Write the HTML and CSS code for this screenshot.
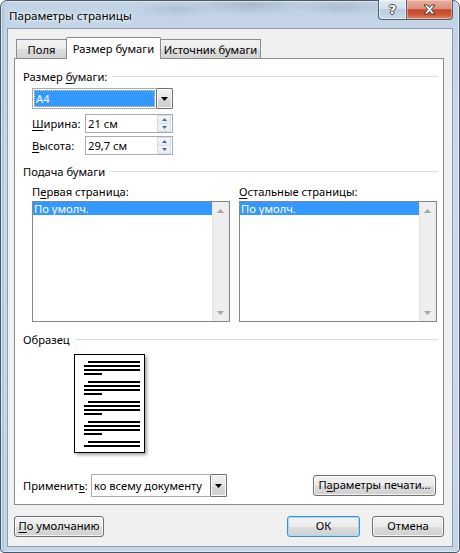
FILE: index.html
```html
<!DOCTYPE html>
<html lang="ru">
<head>
<meta charset="utf-8">
<title>Параметры страницы</title>
<link rel="stylesheet" href="styles.css">
</head>
<body>
<div class="window">
  <div class="titlebar">
    <div class="title">Параметры страницы</div>
    <div class="caption-buttons">
      <div class="cap-btn help"><span class="help-glyph">?</span></div>
      <div class="cap-btn close">
        <svg width="13" height="11" viewBox="0 0 13 11"><path d="M1 1 H4.5 L6.5 3.6 L8.5 1 H12 L8.3 5.5 L12 10 H8.5 L6.5 7.4 L4.5 10 H1 L4.7 5.5 Z" fill="#fff" stroke="#3d3d3d" stroke-width="1" stroke-linejoin="round"/></svg>
      </div>
    </div>
  </div>
  <div class="client">
    <div class="tabs">
      <div class="tab tab-fields">Поля</div>
      <div class="tab tab-size active">Размер бумаги</div>
      <div class="tab tab-source">Источник бумаги</div>
    </div>
    <div class="panel">
      <div class="group-head"><span>Размер <u>б</u>умаги:</span><i class="rule"></i></div>
      <div class="indent">
        <div class="combo combo-size">
          <div class="combo-field"><div class="combo-value selected">A4</div></div>
          <div class="combo-btn"><svg width="7" height="4" viewBox="0 0 7 4"><path d="M0 0H7L3.5 4Z" fill="#000"/></svg></div>
        </div>
        <div class="field-row first">
          <span class="field-label"><u>Ш</u>ирина:</span>
          <div class="spin">
            <span class="spin-value">21 см</span>
            <div class="spin-btns">
              <div class="spin-btn"><svg width="5" height="3" viewBox="0 0 5 3"><path d="M0 3H5L2.5 0Z" fill="#4d6a92"/></svg></div>
              <div class="spin-btn"><svg width="5" height="3" viewBox="0 0 5 3"><path d="M0 0H5L2.5 3Z" fill="#4d6a92"/></svg></div>
            </div>
          </div>
        </div>
        <div class="field-row">
          <span class="field-label"><u>В</u>ысота:</span>
          <div class="spin">
            <span class="spin-value">29,7 см</span>
            <div class="spin-btns">
              <div class="spin-btn"><svg width="5" height="3" viewBox="0 0 5 3"><path d="M0 3H5L2.5 0Z" fill="#4d6a92"/></svg></div>
              <div class="spin-btn"><svg width="5" height="3" viewBox="0 0 5 3"><path d="M0 0H5L2.5 3Z" fill="#4d6a92"/></svg></div>
            </div>
          </div>
        </div>
      </div>

      <div class="group-head head-feed"><span>Подача бумаги</span><i class="rule"></i></div>
      <div class="indent lists">
        <div class="list-col">
          <div class="list-label">П<u>е</u>рвая страница:</div>
          <div class="listbox">
            <div class="list-items"><div class="item selected">По умолч.</div></div>
            <div class="vscroll">
              <div class="sb-arrow"><svg width="7" height="4" viewBox="0 0 7 4"><path d="M0 4H7L3.5 0Z" fill="#a4a4a4"/></svg></div>
              <div class="sb-arrow"><svg width="7" height="4" viewBox="0 0 7 4"><path d="M0 0H7L3.5 4Z" fill="#a4a4a4"/></svg></div>
            </div>
          </div>
        </div>
        <div class="list-col">
          <div class="list-label"><u>О</u>стальные страницы:</div>
          <div class="listbox">
            <div class="list-items"><div class="item selected">По умолч.</div></div>
            <div class="vscroll">
              <div class="sb-arrow"><svg width="7" height="4" viewBox="0 0 7 4"><path d="M0 4H7L3.5 0Z" fill="#a4a4a4"/></svg></div>
              <div class="sb-arrow"><svg width="7" height="4" viewBox="0 0 7 4"><path d="M0 0H7L3.5 4Z" fill="#a4a4a4"/></svg></div>
            </div>
          </div>
        </div>
      </div>

      <div class="group-head head-sample"><span>Образец</span><i class="rule"></i></div>
      <div class="sample-page">
        <div class="para"><i class="ln ind"></i><i class="ln"></i><i class="ln"></i><i class="ln short"></i></div>
        <div class="para"><i class="ln ind"></i><i class="ln"></i><i class="ln"></i><i class="ln short"></i></div>
        <div class="para"><i class="ln ind"></i><i class="ln"></i><i class="ln"></i><i class="ln short"></i></div>
        <div class="para"><i class="ln ind"></i><i class="ln"></i><i class="ln"></i><i class="ln short"></i></div>
        <div class="para"><i class="ln ind"></i><i class="ln"></i></div>
      </div>

      <div class="apply-row">
        <span class="apply-label">Применит<u>ь</u>:</span>
        <div class="combo combo-apply">
          <div class="combo-field"><div class="combo-value">ко всему документу</div></div>
          <div class="combo-btn"><svg width="7" height="4" viewBox="0 0 7 4"><path d="M0 0H7L3.5 4Z" fill="#000"/></svg></div>
        </div>
        <div class="btn btn-print">П<u>а</u>раметры печати...</div>
      </div>
    </div>

    <div class="footer">
      <div class="btn btn-default"><u>П</u>о умолчанию</div>
      <div class="btn btn-ok">ОК</div>
      <div class="btn btn-cancel">Отмена</div>
    </div>
  </div>
</div>
</body>
</html>
```

FILE: styles.css
```css
* { box-sizing: border-box; }
html, body { margin: 0; padding: 0; }
body {
  width: 460px;
  height: 553px;
  overflow: hidden;
  background: #ffffff;
  font-family: "Noto Sans", "Open Sans", sans-serif;
  font-size: 11.2px;
  color: #000;
}
u { text-decoration: underline; text-underline-offset: 2px; }

.window {
  width: 460px;
  height: 553px;
  border: 1px solid #4e5966;
  border-radius: 7px 7px 4px 4px;
  padding: 0 6px 5px;
  display: flex;
  flex-direction: column;
  background:
    radial-gradient(ellipse 60px 10px at 250px 4px, rgba(120,140,165,0.35), transparent),
    radial-gradient(ellipse 50px 8px at 340px 6px, rgba(120,140,165,0.3), transparent),
    radial-gradient(ellipse 40px 8px at 175px 8px, rgba(120,140,165,0.25), transparent),
    linear-gradient(180deg, #c2d3e5 0%, #ccdbeb 40%, #c4d5e8 100%);
  box-shadow: inset 0 0 0 1px rgba(255,255,255,0.55), inset 2px 0 0 1px rgba(150,185,220,0.5);
}

.titlebar {
  height: 27px;
  display: flex;
  justify-content: space-between;
  align-items: flex-start;
}
.title {
  margin-top: 7px;
  padding-left: 2px;
  line-height: 15px;
  font-size: 11.6px;
  text-shadow: 0 0 6px rgba(255,255,255,0.9), 0 0 3px rgba(255,255,255,0.9);
}
.caption-buttons {
  display: flex;
  margin-top: -1px;
}
.cap-btn {
  height: 20px;
  display: flex;
  align-items: center;
  justify-content: center;
  border: 1px solid #55606e;
  border-top: none;
}
.help {
  width: 28px;
  border-right: none;
  border-radius: 0 0 0 4px;
  background: linear-gradient(180deg, #e1eaf3 0%, #d2dfec 45%, #bccde0 50%, #c9d9ea 100%);
  box-shadow: inset 0 0 0 1px rgba(255,255,255,0.5);
}
.help-glyph {
  font-family: "DejaVu Sans", sans-serif;
  font-weight: bold;
  font-size: 13px;
  line-height: 13px;
  color: #fff;
  text-shadow: 1px 0 0 #4a4a4a, -1px 0 0 #4a4a4a, 0 1px 0 #4a4a4a, 0 -1px 0 #4a4a4a;
}
.close {
  width: 47px;
  border-radius: 0 0 4px 0;
  background: linear-gradient(180deg, #eab1a3 0%, #db8f7b 45%, #c6462b 52%, #d05a38 80%, #e48c6c 100%);
  box-shadow: inset 0 0 0 1px rgba(255,220,210,0.45);
}

.client {
  flex: 1;
  border: 1px solid #8e9bab;
  background: #f0f0f0;
  padding-top: 8px;
  display: flex;
  flex-direction: column;
}

.tabs {
  height: 21px;
  padding-left: 8px;
  display: flex;
  align-items: flex-end;
  position: relative;
  z-index: 1;
}
.tab {
  height: 19px;
  border: 1px solid #898c95;
  border-bottom: none;
  background: linear-gradient(180deg, #f2f2f2 0%, #ebebeb 50%, #dddddd 51%, #d3d3d3 100%);
  text-align: center;
  padding-top: 2px;
  line-height: 15px;
  white-space: nowrap;
}
.tab-fields { width: 50px; border-right: none; }
.tab-source { width: 100px; border-left: none; }
.tab.active {
  width: 95px;
  height: 22px;
  margin-bottom: -1px;
  background: #ffffff;
  padding-top: 3px;
  border-radius: 2px 2px 0 0;
}

.panel {
  margin-left: 6px;
  width: 430px;
  height: 447px;
  border: 1px solid #898c95;
  background: #ffffff;
  padding: 10px 5px 7px 8px;
  display: flex;
  flex-direction: column;
}

.group-head {
  height: 15px;
  line-height: 15px;
  display: flex;
  align-items: center;
  white-space: nowrap;
}
.rule {
  flex: 1;
  height: 1px;
  margin-left: 5px;
  background: #d5dfe5;
}
.head-feed { margin-top: 9px; }
.head-sample { margin-top: 10px; }

.indent { margin-left: 9px; }

.combo { display: flex; }
.combo-field {
  flex: 1;
  border: 1px solid #a7adb6;
  border-right: none;
  background: #fff;
  padding: 1px;
  display: flex;
}
.combo-value {
  flex: 1;
  padding-left: 2px;
  line-height: 17px;
  white-space: nowrap;
}
.combo-value.selected {
  background: #3399ff;
  color: #fff;
  outline: 1px dotted #f9c9a0;
  outline-offset: -1px;
}
.combo-btn {
  width: 17px;
  border: 1px solid #6f6f6f;
  border-radius: 1px;
  background: linear-gradient(180deg, #f1f1f1 0%, #e6e6e6 50%, #d8d8d8 51%, #cfcfcf 100%);
  box-shadow: inset 0 0 0 1px #fbfbfb;
  display: flex;
  align-items: center;
  justify-content: center;
}
.combo-size { width: 141px; height: 21px; margin-top: 4px; }
.combo-size .combo-value { line-height: 17px; }

.field-row {
  display: flex;
  align-items: center;
  margin-top: 3px;
}
.field-row.first { margin-top: 5px; }
.field-label { width: 53px; line-height: 15px; }
.spin {
  width: 88px;
  height: 19px;
  border: 1px solid #a7adb6;
  background: #fff;
  display: flex;
  align-items: center;
  padding: 0 1px 0 2px;
}
.spin-value { flex: 1; line-height: 15px; }
.spin-btns {
  width: 14px;
  height: 17px;
  display: flex;
  flex-direction: column;
}
.spin-btn {
  flex: 1;
  border: 1px solid #d6dde6;
  background: linear-gradient(180deg, #f6f8fa, #e8edf2);
  display: flex;
  align-items: center;
  justify-content: center;
}
.spin-btn + .spin-btn { border-top: none; }

.lists {
  display: grid;
  grid-template-columns: 198px 198px;
  column-gap: 9px;
  margin-top: 5px;
}
.list-label { line-height: 15px; }
.listbox {
  margin-top: 2px;
  height: 121px;
  border: 1px solid #828790;
  background: #fff;
  display: flex;
}
.list-items { flex: 1; }
.item {
  height: 13px;
  line-height: 13px;
  padding-left: 1px;
  white-space: nowrap;
}
.item.selected { background: #3399ff; color: #fff; }
.vscroll {
  width: 17px;
  background: linear-gradient(90deg, #e3e3e3 0, #eeeeee 2px, #efefef 15px, #e6e6e6 17px);
  display: flex;
  flex-direction: column;
  justify-content: space-between;
}
.sb-arrow {
  height: 17px;
  display: flex;
  align-items: center;
  justify-content: center;
}

.sample-page {
  margin-top: 7px;
  margin-left: 51px;
  width: 71px;
  height: 99px;
  border: 1px solid #000;
  background: #fff;
  box-shadow: 2px 2px 3px rgba(0,0,0,0.35);
  padding: 6px 4px 0 9px;
  display: flex;
  flex-direction: column;
  gap: 6px;
}
.para { display: flex; flex-direction: column; gap: 2px; }
.ln { display: block; height: 2px; width: 56px; background: #000; }
.ln.ind { width: 52px; margin-left: 4px; }
.ln.short { width: 18px; }

.apply-row {
  margin-top: auto;
  display: flex;
  align-items: center;
}
.apply-label { width: 68px; line-height: 15px; }
.combo-apply { width: 136px; height: 23px; }
.combo-apply .combo-value { line-height: 19px; padding-left: 1px; }

.btn {
  height: 21px;
  border: 1px solid #707070;
  border-radius: 3px;
  background: linear-gradient(180deg, #f2f2f2 0%, #ebebeb 50%, #dddddd 51%, #cfcfcf 100%);
  box-shadow: inset 0 0 0 1px rgba(255,255,255,0.75);
  text-align: center;
  line-height: 18px;
  white-space: nowrap;
}
.btn-print { width: 123px; margin-left: auto; margin-right: 2px; }

.footer {
  margin-top: 11px;
  padding: 0 8px 0 6px;
  display: flex;
}
.btn-default { width: 90px; }
.btn-ok {
  width: 73px;
  margin-left: auto;
  border-color: #3c8fd0;
  box-shadow: inset 0 0 0 1px #a6dcf7;
}
.btn-cancel { width: 72px; margin-left: 12px; }
```
